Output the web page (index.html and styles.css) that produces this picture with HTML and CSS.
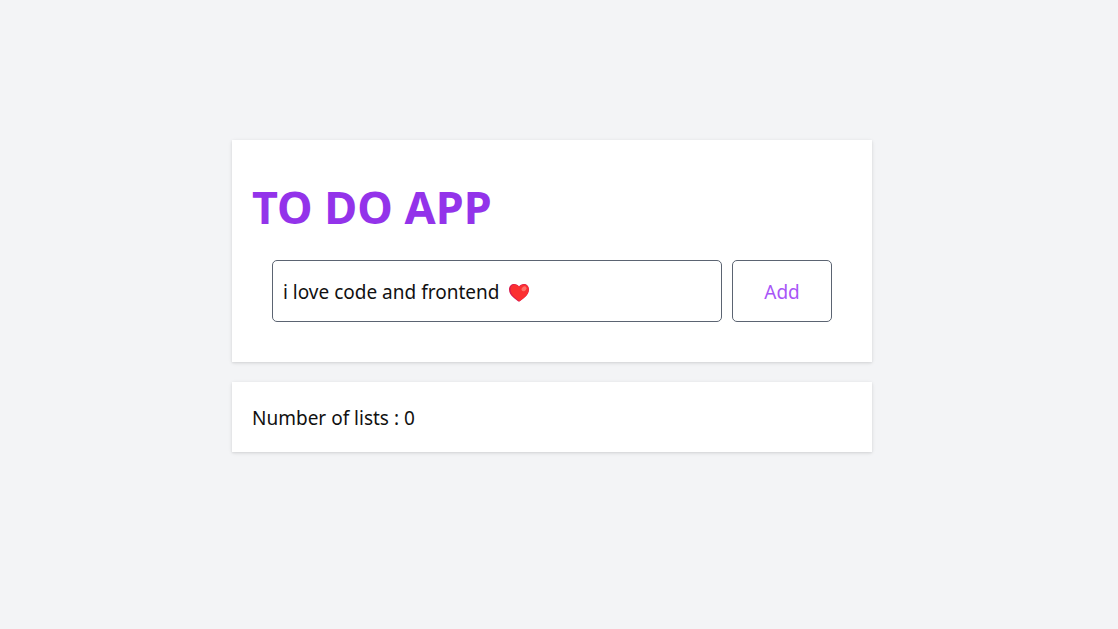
FILE: index.html
```html
<!DOCTYPE html>
<html lang="en">
<head>
<meta charset="utf-8">
<meta name="viewport" content="width=device-width, initial-scale=1">
<title>To Do App</title>
<link rel="stylesheet" href="styles.css">
</head>
<body>
<main class="app">
  <section class="card">
    <h1 class="title">TO DO APP</h1>
    <form class="form">
      <div class="field">
        <input class="input" type="text" aria-label="New task" value="i love code and frontend">
        <svg class="heart" viewBox="0 0 20 18" aria-hidden="true">
          <path fill="#d81b4f" d="M10 17.8C7 15.6 0 11.5 0 5.5C0 2 2.300 0 5.200 0C7.400 0 9 1 10 2.600C11 1 12.600 0 14.800 0C17.700 0 20 2 20 5.500C20 11.500 13 15.600 10 17.800Z"/>
          <path fill="#fb2f31" d="M10.500 17.200C7.500 14.800 1.500 11 1.500 5.300C1.500 2.300 3.300 .6 5.700 .6C7.800 .6 9.200 1.700 10.200 3.300C11.200 1.500 12.700 .4 14.800 .4C17.600 .4 19.700 2.300 19.700 5.500C19.700 11.300 13.300 15 10.500 17.200Z"/>
          <ellipse cx="15" cy="4.800" rx="2.800" ry="2.100" fill="#ff7068" transform="rotate(-40 15 4.800)"/>
        </svg>
      </div>
      <button class="add" type="submit">Add</button>
    </form>
  </section>
  <section class="card">
    <p class="count">Number of lists : 0</p>
  </section>
</main>
</body>
</html>
```
FILE: styles.css
```css
* {
  box-sizing: border-box;
}

body {
  margin: 0;
  min-height: 100vh;
  padding: 140px 14px 0 0;
  background: #f3f4f6;
  color: #111;
  font: 19px/30px "Noto Sans", "Open Sans", sans-serif;
}

.app {
  display: grid;
  gap: 20px;
  max-width: 640px;
  margin: 0 auto;
}

.card {
  padding: 20px;
  background: #fff;
  box-shadow: 0 1px 4px rgba(0, 0, 0, 0.1), 0 1px 2px rgba(0, 0, 0, 0.06);
}

.title {
  margin: 0;
  padding: 17px 0 3px;
  color: #9333ea;
  font-size: 45px;
  line-height: 60px;
  font-weight: 700;
}

.form {
  display: flex;
  gap: 10px;
  padding: 20px;
}

.field {
  position: relative;
  flex: 1;
}

.input,
.add {
  height: 62px;
  border: 1px solid #5b6472;
  border-radius: 5px;
  background: #fff;
  font: inherit;
}

.input {
  display: block;
  width: 100%;
  padding: 2px 10px 0;
  color: inherit;
}

.heart {
  position: absolute;
  left: 237px;
  top: 24px;
  width: 20px;
  height: 18px;
}

.add {
  width: 100px;
  padding: 2px 0 0;
  color: #a855f7;
}

.count {
  margin: 0;
  line-height: 32px;
  height: 30px;
}
```
